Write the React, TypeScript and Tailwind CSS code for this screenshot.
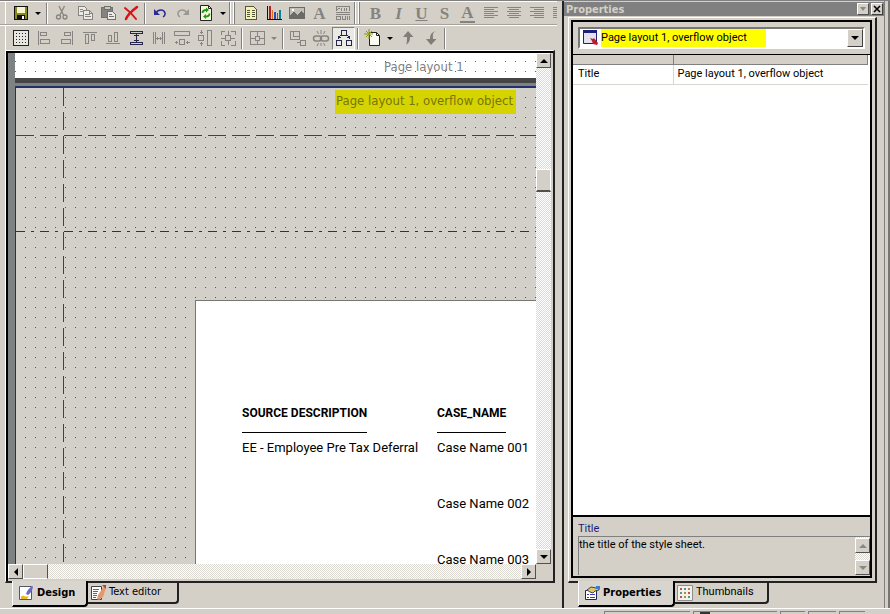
import React, { useState } from "react";

interface IconProps {
  children: React.ReactNode;
  color?: string;
}

const GRAY = "#868480";

const Icon = ({ children, color = GRAY }: IconProps) => (
  <svg width="18" height="18" viewBox="0 0 18 18" fill="none" stroke={color} shapeRendering="crispEdges" aria-hidden="true">
    {children}
  </svg>
);

interface ToolProps {
  label: string;
  pressed?: boolean;
  children: React.ReactNode;
}

const Tool = ({ label, pressed, children }: ToolProps) => (
  <button
    type="button"
    aria-label={label}
    className={
      pressed
        ? "flex h-[23px] w-[23px] shrink-0 items-center justify-center border border-[#808080] border-r-white border-b-white bg-[#ebe9e4]"
        : "flex h-[23px] w-[23px] shrink-0 items-center justify-center"
    }
  >
    {children}
  </button>
);

const Letter = ({ children, className = "" }: { children: string; className?: string }) => (
  <span className={`font-['Liberation_Serif',serif] text-[17px] leading-[17px] font-bold text-[#85837f] ${className}`}>{children}</span>
);

const MenuArrow = ({ label, dim }: { label: string; dim?: boolean }) => (
  <button type="button" aria-label={label} className="flex h-[23px] w-3 shrink-0 items-center justify-center">
    <svg width="6" height="3" viewBox="0 0 6 3" fill={dim ? GRAY : "#000"} aria-hidden="true">
      <path d="M0 0h6L3 3z" />
    </svg>
  </button>
);

const Separator = () => (
  <div className="flex h-[21px] w-[6px] shrink-0 justify-center">
    <div className="w-[2px] border-r border-l border-r-white border-l-[#808080]" />
  </div>
);

const GroupBreak = () => (
  <div className="flex h-[24px] w-[10px] shrink-0 justify-between">
    <div className="w-[2px] border-r border-l border-r-white border-l-[#808080]" />
    <div className="mr-1 w-[2px] border-r border-l border-r-[#808080] border-l-white" />
  </div>
);

const TextLines = ({ align }: { align: "left" | "center" | "right" }) => {
  const short = align === "left" ? "M2 5.500h10M2 9.500h10M2 13.500h10" : align === "center" ? "M4 5.500h10M4 9.500h10M4 13.500h10" : "M6 5.500h10M6 9.500h10M6 13.500h10";
  return (
    <Icon>
      <path d="M2 3.500h14M2 7.500h14M2 11.500h14" />
      <path d={short} />
    </Icon>
  );
};

const FormatToolbar = () => (
  <div className="flex h-6 items-center overflow-hidden border-t border-b border-t-white border-b-[#a5a29b] pl-[9px]">
    <Tool label="Save">
      <Icon color="#111">
        <path d="M2.500 2.500h13v13h-13z" fill="#8a8a1c" />
        <path d="M5 3h8v6H5z" fill="#f3f5cf" stroke="none" />
        <path d="M5 11h8v4H5z" fill="#111" stroke="none" />
        <path d="M10 12h2v3h-2z" fill="#fff" stroke="none" />
      </Icon>
    </Tool>
    <MenuArrow label="Save options" />
    <Separator />
    <Tool label="Cut">
      <svg width="18" height="18" viewBox="0 0 18 18" fill="none" stroke={GRAY} strokeWidth="1.300" aria-hidden="true">
        <path d="M6 2l4.500 9M11.500 2L7 11" />
        <circle cx="5.500" cy="13" r="2" />
        <circle cx="12" cy="13" r="2" />
      </svg>
    </Tool>
    <Tool label="Copy">
      <Icon>
        <path d="M2.500 2.500h6l2 2v7h-8z" fill="#eceae5" />
        <path d="M7.500 6.500h6l3 3v6h-9z" fill="#eceae5" />
        <path d="M4 5.500h3M4 7.500h3M9 10.500h5M9 12.500h6M13.500 6v3.500H17" />
      </Icon>
    </Tool>
    <Tool label="Paste">
      <Icon color="#73716d">
        <path d="M2.500 3.500h11v10h-11z" fill="#85837f" />
        <path d="M5 2.500h6v3H5z" fill="#c9c6bf" />
        <path d="M8.500 7.500h5l3 3v5h-8z" fill="#eceae5" />
        <path d="M10 10.500h3M10 12.500h5" />
      </Icon>
    </Tool>
    <Tool label="Delete">
      <svg width="18" height="18" viewBox="0 0 18 18" fill="none" stroke="#d81414" strokeLinecap="round" aria-hidden="true">
        <path d="M3 4c4 3 8 7 11 11" strokeWidth="2" />
        <path d="M15 3C11 6 6 10 4 15" strokeWidth="2.500" />
      </svg>
    </Tool>
    <Separator />
    <Tool label="Undo">
      <svg width="18" height="18" viewBox="0 0 18 18" fill="none" stroke="#2a2a96" strokeWidth="1.500" aria-hidden="true">
        <path d="M5 9c2-4 8-4 9 0 .5 2-.5 3-2 4" />
        <path d="M3 5v6h6z" fill="#2a2a96" stroke="none" />
      </svg>
    </Tool>
    <Tool label="Redo">
      <svg width="18" height="18" viewBox="0 0 18 18" fill="none" stroke="#9a9893" strokeWidth="1.500" aria-hidden="true">
        <path d="M13 9C11 5 5 5 4 9c-.5 2 .5 3 2 4" />
        <path d="M15 5v6H9z" fill="#9a9893" stroke="none" />
      </svg>
    </Tool>
    <Tool label="Refresh">
      <svg width="18" height="18" viewBox="0 0 18 18" fill="none" aria-hidden="true">
        <path d="M3.500 1.500h8l3 3v12h-11z" fill="#f7f9d8" stroke="#222" />
        <path d="M11.500 1.500v3h3" stroke="#222" />
        <path d="M5.500 9c0-2 1.500-3 4-3M12.500 9.500c0 2-1.500 3-4 3" stroke="#1a9a1a" strokeWidth="1.800" />
        <path d="M9 3.500L12 6 9 8.500zM9 10l-3 2.500L9 15z" fill="#1a9a1a" />
      </svg>
    </Tool>
    <MenuArrow label="Refresh options" />
    <GroupBreak />
    <Tool label="Insert table">
      <Icon color="#55553a">
        <path d="M3.500 2.500h8l3 3v10h-11z" fill="#f4f3b8" />
        <path d="M5 6.500h3M10 6.500h3M5 8.500h3M10 8.500h3M5 10.500h3M10 10.500h3M5 12.500h3M10 12.500h3" />
      </Icon>
    </Tool>
    <Tool label="Insert chart">
      <Icon color="#111">
        <path d="M2.500 2v13M2 15.500h15" />
        <path d="M5 2v13" stroke="#b02020" strokeWidth="2" />
        <path d="M7.500 6v9" stroke="#e07020" />
        <path d="M9.500 8v7" stroke="#2050b0" strokeWidth="2" />
        <path d="M12.500 9v6" stroke="#208080" />
        <path d="M15 6v9" stroke="#108090" strokeWidth="2" />
      </Icon>
    </Tool>
    <Tool label="Insert picture">
      <Icon color="#6d6b67">
        <path d="M1.500 3.500h15v11h-15z" fill="#c2bfb8" />
        <path d="M2 14v-3l4-3 3 3 4-4 3 3v4z" fill="#6d6b67" stroke="none" />
        <path d="M4 5h2v2H4z" fill="#fff" stroke="none" />
      </Icon>
    </Tool>
    <Tool label="Insert text">
      <Letter>A</Letter>
    </Tool>
    <Tool label="Insert field">
      <Icon>
        <path d="M2 2.500h14M2 8.500h14M2 10.500h14M2.500 3v4M5.500 4l-3 2M7.500 4v3M10.500 4v3M12.500 4v3M15.500 3v4M6.500 12h-4v3h4zM8.500 12v3h3v-3M13.500 12v4M15.500 12v4" />
      </Icon>
    </Tool>
    <GroupBreak />
    <Tool label="Bold">
      <Letter className="text-[15px]">B</Letter>
    </Tool>
    <Tool label="Italic">
      <Letter className="text-[15px] italic">I</Letter>
    </Tool>
    <Tool label="Underline">
      <Letter className="text-[14px] underline">U</Letter>
    </Tool>
    <Tool label="Shadow">
      <Letter className="text-[15px]">S</Letter>
    </Tool>
    <Tool label="Font color">
      <Letter className="border-b-2 border-[#85837f] px-px text-[14px] leading-[13px]">A</Letter>
    </Tool>
    <Tool label="Align left">
      <TextLines align="left" />
    </Tool>
    <Tool label="Align center">
      <TextLines align="center" />
    </Tool>
    <Tool label="Align right">
      <TextLines align="right" />
    </Tool>
    <Tool label="Justify">
      <TextLines align="left" />
    </Tool>
  </div>
);

const LayoutToolbar = () => (
  <div className="flex h-[25px] items-center overflow-hidden border-t border-white pl-[9px]">
    <Tool label="Show grid">
      <Icon color="#222">
        <path d="M1.500 1.500h15v15h-15z" fill="#e9e7e2" />
        <path d="M4 4.500h11M4 7.500h11M4 10.500h11M4 13.500h11" strokeDasharray="1 2" />
      </Icon>
    </Tool>
    <Tool label="Align left edges">
      <Icon>
        <path d="M3.500 2v14M5.500 3.500h6v3h-6zM5.500 10.500h9v4h-9z" />
      </Icon>
    </Tool>
    <Tool label="Align right edges">
      <Icon>
        <path d="M14.500 2v14M6.500 3.500h6v3h-6zM3.500 10.500h9v4h-9z" />
      </Icon>
    </Tool>
    <Tool label="Align top edges">
      <Icon>
        <path d="M2 3.500h14M4.500 5.500h3v9h-3zM10.500 5.500h3v6h-3z" />
      </Icon>
    </Tool>
    <Tool label="Align bottom edges">
      <Icon>
        <path d="M2 14.500h14M4.500 6.500h3v6h-3zM10.500 3.500h3v9h-3z" />
      </Icon>
    </Tool>
    <Tool label="Same height">
      <Icon color="#26264a">
        <path d="M3 2.500h12v2H3zM3 13.500h12v2H3zM9.500 5v8M7 6.500h5M7 11.500h5" />
      </Icon>
    </Tool>
    <Tool label="Same width">
      <Icon>
        <path d="M3.500 3v12M5.500 3v12M14.500 3v12M12.500 3v12M6 9.500h6M7.500 8v3M10.500 8v3" />
      </Icon>
    </Tool>
    <Tool label="Center horizontally">
      <Icon>
        <path d="M1.500 2.500h15v4h-15zM6.500 10.500h5v5h-5zM2 13.500h3M13 13.500h4M3.500 12v3M14.500 12v3" />
      </Icon>
    </Tool>
    <Tool label="Center vertically">
      <Icon>
        <path d="M11.500 1.500h4v15h-4zM2.500 6.500h5v5h-5zM5.500 1v4M5.500 13v4M4 3.500h3M4 14.500h3" />
      </Icon>
    </Tool>
    <Tool label="Center on page">
      <Icon>
        <path d="M2 6V2h4M12 2h4v4M16 12v4h-4M6 16H2v-4M6.500 6.500h5v5h-5zM9.500 2v4M9.500 12v4M2 9.500h4M12 9.500h4" />
      </Icon>
    </Tool>
    <Separator />
    <Tool label="Split cells">
      <Icon>
        <path d="M2.500 2.500h14v13h-14zM9.500 2v14M2 9.500h15" />
        <path d="M7.500 7.500h4v4h-4z" fill="#d4d0c8" />
      </Icon>
    </Tool>
    <MenuArrow label="Split options" dim />
    <Separator />
    <Tool label="Group">
      <Icon>
        <path d="M1.500 2.500h9v8h-9zM4.500 2.500h6v5h-6z" />
        <path d="M11.500 11.500h5v5h-5z" fill="#d4d0c8" />
        <path d="M8 13.500h3" />
      </Icon>
    </Tool>
    <Tool label="Unlink">
      <svg width="18" height="18" viewBox="0 0 18 18" fill="none" stroke={GRAY} strokeWidth="1.500" aria-hidden="true">
        <rect x="1.500" y="7" width="8" height="5" rx="2.500" />
        <rect x="8.500" y="7" width="8" height="5" rx="2.500" />
        <path d="M5 2l1.500 3M9 1v4M13 2l-1.500 3M5 17l1.500-3M9 17v-3M13 17l-1.500-3" strokeWidth="1" />
      </svg>
    </Tool>
    <Tool label="Overflow" pressed>
      <Icon color="#26264a">
        <path d="M6.500 1.500h5v5h-5zM1.500 11.500h5v5h-5zM11.500 11.500h5v5h-5z" />
        <path d="M5 6.500h1M4 7.500h1M3 8.500h3M3 7v3M13 6.500h-1M14 7.500h-1M15 8.500h-3M14.500 7v3" />
      </Icon>
    </Tool>
    <Separator />
    <Tool label="New page">
      <svg width="18" height="18" viewBox="0 0 18 18" fill="none" aria-hidden="true">
        <path d="M5.500 3.500h7l3 3v10h-10z" fill="#fbfbf2" stroke="#222" />
        <path d="M12.500 3.500v3h3" stroke="#222" />
        <path d="M5 0v10M0 5h9M2 2l6 6M8 2L2 8" stroke="#8e9a10" />
      </svg>
    </Tool>
    <MenuArrow label="New page options" />
    <Tool label="Move up">
      <svg width="18" height="18" viewBox="0 0 18 18" fill="#807e79" aria-hidden="true">
        <path d="M9 2l5.500 6H11c0 4-1 6-4 7.500 1-2 1-4 1-7.500H4z" />
      </svg>
    </Tool>
    <Tool label="Move down">
      <svg width="18" height="18" viewBox="0 0 18 18" fill="#807e79" aria-hidden="true">
        <path d="M9 16l5.500-6H11c0-4-1-6 3-8-4 1-6 3-6 8H4z" />
      </svg>
    </Tool>
    <Separator />
  </div>
);

const rows = ["Case Name 001", "Case Name 002", "Case Name 003"];

const DesignCanvas = () => (
  <div className="flex min-h-0 min-w-0 flex-1 flex-col overflow-hidden bg-[#7f8283] pl-[7px] font-['DejaVu_Sans_Condensed','DejaVu_Sans',sans-serif]">
    <div className="h-[25px] shrink-0 overflow-hidden bg-white bg-[conic-gradient(from_270deg_at_1px_1px,#666_90deg,transparent_0)] bg-[length:10px_10px] bg-[position:10px_8px]">
      <p className="pt-[6px] pl-[369px] text-[13px] leading-[16px] whitespace-nowrap text-[#808080]">Page layout 1</p>
    </div>
    <div className="mb-[3px] h-[5px] shrink-0 bg-[#454545]" />
    <div className="relative min-h-0 flex-1 overflow-hidden border-t-2 border-l border-[#22306e] bg-[#d3d0c9] bg-[conic-gradient(from_270deg_at_1px_1px,#55534f_90deg,transparent_0)] bg-[length:10px_10px] bg-[position:9px_9px]">
      <p className="mt-[2px] ml-[319px] h-6 w-[181px] bg-[#d6d400] pt-[3px] pl-px text-[13px] leading-[16px] whitespace-nowrap text-[#77750a]">
        Page layout 1, overflow object
      </p>
      {/* margin guides */}
      <div className="absolute inset-x-0 top-[47px] h-px bg-[repeating-linear-gradient(to_right,#44433a_0_18px,transparent_18px_24px)]" />
      <div className="absolute inset-x-0 top-[143px] h-px bg-[repeating-linear-gradient(to_right,#22306e_0_9px,transparent_9px_15px,#22306e_15px_18px,transparent_18px_24px)]" />
      <div className="absolute inset-y-0 left-[47px] w-px bg-[repeating-linear-gradient(to_bottom,#44433a_0_18px,transparent_18px_24px)]" />
      <div className="mt-[186px] ml-[179px] h-full border-t border-l border-[#77756f] bg-white pt-[104px] pl-[46px] font-['Roboto','Liberation_Sans',sans-serif] text-[13px] text-black">
        <table className="border-collapse text-left">
          <thead>
            <tr>
              <th className="w-[195px] p-0 align-top text-[12px] leading-[16px] whitespace-nowrap">
                <span className="inline-block border-b border-black pb-[11px]">SOURCE DESCRIPTION</span>
              </th>
              <th className="p-0 align-top text-[12px] leading-[16px] whitespace-nowrap">
                <span className="inline-block border-b border-black pb-[11px]">CASE_NAME</span>
              </th>
            </tr>
          </thead>
          <tbody>
            {rows.map((name, i) => (
              <tr key={name} className="h-14 align-top">
                <td className="p-0 pt-[9px] leading-[12px] whitespace-nowrap">{i === 0 ? "EE - Employee Pre Tax Deferral" : ""}</td>
                <td className="p-0 pt-[9px] leading-[12px] whitespace-nowrap">{name}</td>
              </tr>
            ))}
          </tbody>
        </table>
      </div>
    </div>
  </div>
);

interface ScrollButtonProps {
  dir: "up" | "down" | "left" | "right";
  dim?: boolean;
}

const arrows = {
  up: "M0 6l4-4 4 4z",
  down: "M0 2l4 4 4-4z",
  left: "M6 0L2 4l4 4z",
  right: "M2 0l4 4-4 4z",
};

const ScrollButton = ({ dir, dim }: ScrollButtonProps) => (
  <button
    type="button"
    aria-label={`Scroll ${dir}`}
    className="flex h-[15px] w-[15px] shrink-0 items-center justify-center border border-white border-r-[#505050] border-b-[#505050] bg-[#d4d0c8]"
  >
    <svg width="8" height="8" viewBox="0 0 8 8" fill={dim ? "#8a8884" : "#000"} aria-hidden="true">
      <path d={arrows[dir]} />
    </svg>
  </button>
);

const track = "bg-[conic-gradient(#fff_25%,#dcd9d3_0_50%,#fff_0_75%,#dcd9d3_0)] bg-[length:2px_2px]";

interface TabProps {
  label: string;
  active: boolean;
  onSelect: () => void;
  className: string;
  children: React.ReactNode;
}

const Tab = ({ label, active, onSelect, className, children }: TabProps) => (
  <button
    type="button"
    role="tab"
    aria-selected={active}
    onClick={onSelect}
    className={
      (active
        ? "-mt-[2px] flex h-[26px] items-center gap-[3px] rounded-br border-r-2 border-b-2 border-l border-black border-l-white bg-[#d8d5ce] pl-[5px] font-bold whitespace-nowrap "
        : "flex h-[21px] items-center gap-[3px] rounded-br border-r-2 border-b-2 border-[#222] bg-[#d4d0c8] pl-[2px] whitespace-nowrap ") + className
    }
  >
    {children}
    {label}
  </button>
);

const PropertiesPanel = () => {
  const [tab, setTab] = useState("Properties");
  const [object, setObject] = useState("Page layout 1, overflow object");

  return (
    <aside className="flex w-[326px] shrink-0 flex-col">
      <div className="mr-[3px] flex min-h-0 flex-1 flex-col border-r border-l-2 border-r-[#808080] border-l-[#222]">
        <div className="mt-px flex h-[14px] items-center bg-[#808080] pr-px">
          <h2 className="flex-1 pl-[2px] font-['DejaVu_Sans_Condensed','DejaVu_Sans',sans-serif] text-[11px] leading-[13px] font-bold text-[#d4d0c8]">Properties</h2>
          <button type="button" aria-label="Panel menu" className="mr-[2px] flex h-[12px] w-[12px] items-center justify-center border border-white border-r-[#505050] border-b-[#505050] bg-[#d4d0c8]">
            <svg width="6" height="4" viewBox="0 0 6 4" fill="#8a8884" aria-hidden="true">
              <path d="M0 0h6L3 4z" />
            </svg>
          </button>
          <button type="button" aria-label="Close" className="flex h-[12px] w-[12px] items-center justify-center border border-white border-r-[#404040] border-b-[#404040] bg-[#d4d0c8]">
            <svg width="8" height="8" viewBox="0 0 8 8" stroke="#000" strokeWidth="1.600" aria-hidden="true">
              <path d="M1 1l6 6M7 1L1 7" />
            </svg>
          </button>
        </div>

        <div className="mt-px mr-[7px] ml-1 flex min-h-0 flex-1 flex-col border-t border-r-2 border-b-2 border-l border-white border-r-[#222] border-b-[#222] pt-[2px] pr-[3px] pb-[3px] pl-[2px]">
          <div className="flex min-h-0 flex-1 flex-col border-2 border-black bg-white">
            <div className="h-[33px] border-b border-black bg-[#d4d0c8] px-[5px] pt-[5px]">
              <div className="flex h-[22px] border-2 border-[#777] border-r-white border-b-white bg-white">
                <svg className="ml-[2px] shrink-0" width="19" height="18" viewBox="0 0 19 18" aria-hidden="true">
                  <path d="M1.500 2.500h13v12h-13z" fill="#e2e1ee" stroke="#20206c" />
                  <path d="M1 1h14v3H1z" fill="#20207c" />
                  <path d="M8 9l3 1 1-1 4 5-1 2-4-1-1-3z" fill="#c41a2c" />
                </svg>
                <select
                  aria-label="Selected object"
                  value={object}
                  onChange={(e) => setObject(e.target.value)}
                  className="min-w-0 flex-1 appearance-none bg-[linear-gradient(to_right,#ff0_165px,#fff_0)] font-['Roboto',sans-serif] text-[11px] leading-[16px] text-black outline-none"
                >
                  <option>Page layout 1, overflow object</option>
                  <option>Page layout 1</option>
                </select>
                <div className="pointer-events-none flex w-[16px] items-center justify-center border border-white border-r-[#404040] border-b-[#404040] bg-[#d4d0c8]">
                  <svg width="8" height="4" viewBox="0 0 8 4" aria-hidden="true">
                    <path d="M0 0h8L4 4z" />
                  </svg>
                </div>
              </div>
            </div>

            <div className="min-h-0 flex-1 overflow-hidden pr-[2px]">
              <table className="w-full table-fixed border-collapse text-left font-['Roboto',sans-serif] text-[11px] leading-[16px] text-black">
                <thead>
                  <tr className="h-[9px] bg-[#d4d0c8]">
                    <th aria-label="Name" className="w-[100px] border-r border-b border-[#808080] p-0" />
                    <th aria-label="Value" className="border-r border-b border-[#808080] p-0" />
                  </tr>
                </thead>
                <tbody>
                  <tr className="h-[20px]">
                    <td className="border-r border-b border-[#d8d6d0] py-0 pl-[5px]">Title</td>
                    <td className="border-b border-[#d8d6d0] py-0 pl-1 whitespace-nowrap">{object}</td>
                  </tr>
                </tbody>
              </table>
            </div>

            <div className="h-[61px] border-t-2 border-black bg-[#d4d0c8] pt-1 pl-[5px] font-['Roboto',sans-serif] text-[11px]">
              <label htmlFor="hint" className="block h-[15px] leading-[15px] text-[#1c1c78]">
                Title
              </label>
              <div className="flex h-[39px] border-t border-l border-[#808080]">
                <textarea
                  id="hint"
                  readOnly
                  value="the title of the style sheet."
                  className="min-w-0 flex-1 resize-none overflow-hidden bg-transparent leading-[15px] text-black outline-none"
                />
                <div className={`flex flex-col justify-between pt-px ${track}`}>
                  <ScrollButton dir="up" dim />
                  <ScrollButton dir="down" dim />
                </div>
              </div>
            </div>
          </div>
        </div>

        <div role="tablist" className="flex h-[25px] shrink-0 pl-[14px] text-[11px]">
          <Tab label="Properties" active={tab === "Properties"} onSelect={() => setTab("Properties")} className="w-[97px] font-['DejaVu_Sans_Condensed','DejaVu_Sans',sans-serif]">
            <svg width="16" height="16" viewBox="0 0 16 16" fill="none" aria-hidden="true">
              <path d="M1.500 5.500h11v9h-11z" fill="#fff" stroke="#222260" />
              <path d="M3 9.500h2M6 9.500h5M3 12.500h2M6 12.500h5" stroke="#3a3ab0" />
              <path d="M3 5l4-3 5 1 3-1v3l-4 1-2 2-3-1z" fill="#e0c46a" stroke="#444" />
              <path d="M12 1h4v3h-4z" fill="#3b7cc4" />
            </svg>
          </Tab>
          <Tab label="Thumbnails" active={tab === "Thumbnails"} onSelect={() => setTab("Thumbnails")} className="w-[94px] font-['Roboto',sans-serif]">
            <svg width="16" height="16" viewBox="0 0 16 16" aria-hidden="true">
              <path d="M.5.5h15v15H.5z" fill="#f3f1ec" stroke="#908e89" />
              <path d="M3 3h2v2H3zM11 7h2v2h-2zM3 11h2v2H3z" fill="#c05050" />
              <path d="M7 3h2v2H7zM3 7h2v2H3zM11 11h2v2h-2z" fill="#4a9a9a" />
              <path d="M11 3h2v2h-2zM7 7h2v2H7zM7 11h2v2H7z" fill="#b08a40" />
            </svg>
          </Tab>
        </div>
      </div>
    </aside>
  );
};

const App = () => {
  const [view, setView] = useState("Design");

  return (
    <div className="flex h-screen w-full flex-col overflow-hidden border-t border-[#808080] bg-[#d4d0c8] font-['Liberation_Sans',Arial,sans-serif] text-black">
      <div className="flex min-h-0 flex-1 border-r-2 border-[#77756f]">
        <main className="flex min-w-0 flex-1 flex-col pr-[7px]">
          <div className="ml-[5px] -mr-[2px] border-l border-white">
            <div className="-ml-[6px]">
              <FormatToolbar />
              <LayoutToolbar />
            </div>
          </div>
          <div className="ml-[5px] flex min-h-0 flex-1 flex-col border-t border-r-2 border-b-2 border-l border-white border-r-[#222] border-b-[#222]">
            <div className="flex min-h-0 flex-1 flex-col border-t-2 border-l-2 border-black pr-[2px] pb-[2px]">
              <div className="flex min-h-0 flex-1">
                <DesignCanvas />
                <div className={`flex w-[15px] shrink-0 flex-col ${track}`}>
                  <ScrollButton dir="up" />
                  <div className="mt-[101px] h-[23px] border border-white border-b-2 border-b-[#505050] bg-[#d4d0c8]" />
                  <div className="flex-1" />
                  <ScrollButton dir="down" />
                </div>
              </div>
              <div className={`mr-[15px] flex h-[15px] shrink-0 ${track}`}>
                <ScrollButton dir="left" />
                <div className="w-[25px] border border-white border-r-[#505050] bg-[#d4d0c8]" />
                <div className="flex-1" />
                <ScrollButton dir="right" />
              </div>
            </div>
          </div>
          <div role="tablist" className="flex h-[25px] shrink-0 pl-3 font-['DejaVu_Sans_Condensed','DejaVu_Sans',sans-serif] text-[11px]">
            <Tab label="Design" active={view === "Design"} onSelect={() => setView("Design")} className="w-[76px]">
              <svg width="16" height="16" viewBox="0 0 16 16" fill="none" aria-hidden="true">
                <path d="M1.500 1.500h12v13h-12z" fill="#fff" stroke="#55556a" />
                <path d="M3 12c2-3 4 1 8-1l-2 3H3z" fill="#e8b820" />
                <path d="M15 1c-3 1-6 4-7 8l2 1c3-2 5-6 5-9z" fill="#6a6ac8" />
              </svg>
            </Tab>
            <Tab label="Text editor" active={view === "Text editor"} onSelect={() => setView("Text editor")} className="w-[91px]">
              <svg width="16" height="16" viewBox="0 0 16 16" fill="none" aria-hidden="true">
                <path d="M1.500 1.500h10v13h-10z" fill="#fff" stroke="#444" />
                <path d="M3 4.500h6M3 6.500h5M3 8.500h4M3 10.500h4M3 12.500h3" stroke="#666" />
                <path d="M14 1l2 2-3 9-4 3-2-1 1-4z" fill="#e09a70" />
                <path d="M12 0h4v4z" fill="#c03a3a" />
              </svg>
            </Tab>
          </div>
        </main>
        <PropertiesPanel />
      </div>
      <footer className="flex h-[6px] shrink-0 justify-end border-t border-white pt-[2px] pr-[25px]">
        <div className="flex gap-[3px]">
          <div className="w-[86px] border-t border-l border-[#808080]" />
          <div className="flex w-[84px] border-t border-l border-[#808080] pl-[6px]">
            <div className="w-[10px] border-t-2 border-[#333]" />
          </div>
          <div className="w-[25px] border-t border-l border-[#808080]" />
          <div className="w-[28px] border-t border-l border-[#808080]" />
          <div className="w-[26px] border-t border-l border-[#808080]" />
        </div>
      </footer>
    </div>
  );
};

export default App;
